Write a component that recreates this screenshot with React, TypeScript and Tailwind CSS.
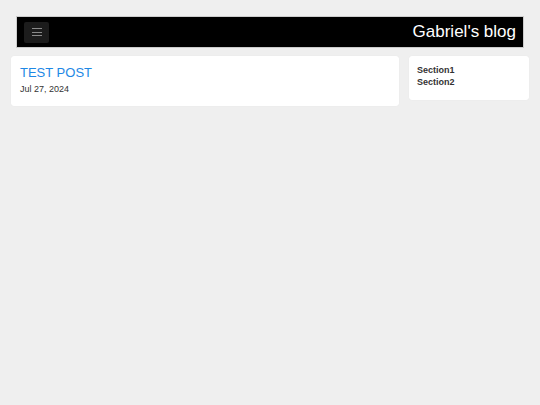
import React from "react";

export default function App() {
  return (
    <div
      className="w-[540px] h-[405px] bg-[#efefef] overflow-hidden"
      style={{ fontFamily: '"Liberation Sans", Arial, sans-serif' }}
    >
      <div className="pt-4 mx-4">
        <header className="h-[32px] border border-[#cccccc] bg-black flex items-center justify-between pl-[7px] pr-[7px]">
          <button className="w-[25px] h-[21px] rounded-[2px] bg-[#1c1c1c] flex flex-col items-center justify-center gap-[2.5px]">
            <span className="block w-[10px] h-[1px] bg-[#8a8a8a]" />
            <span className="block w-[10px] h-[1px] bg-[#8a8a8a]" />
            <span className="block w-[10px] h-[1px] bg-[#8a8a8a]" />
          </button>
          <span className="text-white text-[17px] leading-[20px]">Gabriel's blog</span>
        </header>
      </div>
      <div className="mt-[8px] px-[11px] flex items-start gap-[10px]">
        <div className="flex-1 h-[50px] bg-white rounded-[3px] shadow-[0_0_1px_rgba(0,0,0,0.08)] pl-[9px] pt-[9px]">
          <div className="text-[13px] leading-[15px] text-[#1e88e5]">TEST POST</div>
          <div className="mt-[4px] text-[9px] leading-[11px] text-[#333333]">Jul 27, 2024</div>
        </div>
        <div className="w-[120px] h-[44px] bg-white rounded-[3px] shadow-[0_0_1px_rgba(0,0,0,0.08)] pl-[8px] pt-[8px]">
          <div className="text-[9px] leading-[12px] font-bold text-[#333333]">Section1</div>
          <div className="text-[9px] leading-[12px] font-bold text-[#333333]">Section2</div>
        </div>
      </div>
    </div>
  );
}
